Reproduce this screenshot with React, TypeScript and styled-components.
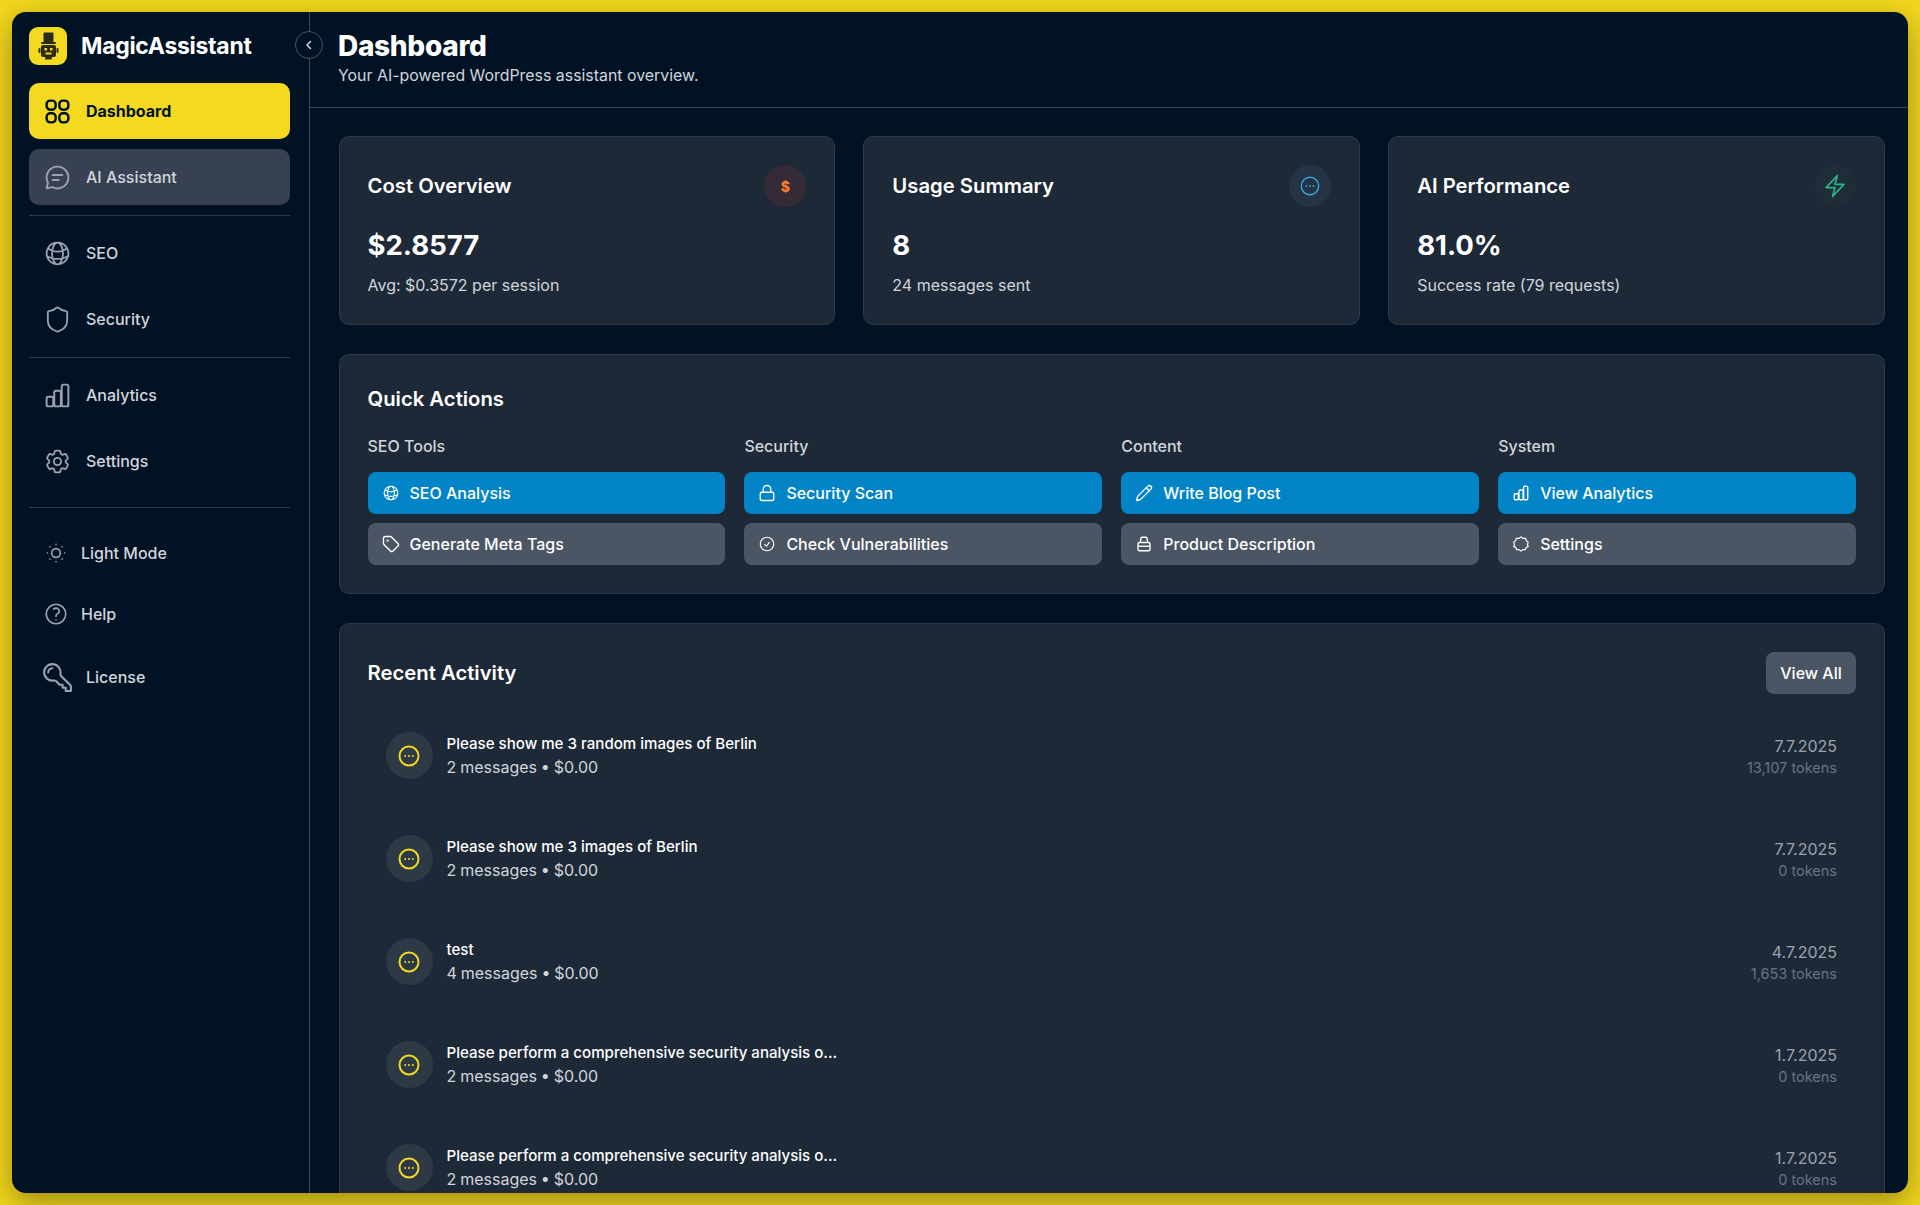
import React from 'react';
import styled, { createGlobalStyle } from 'styled-components';
import { Lock, Pencil, Shield, SunDim, Tag } from 'lucide-react';
import {
  HiOutlineBolt,
  HiOutlineCheckCircle,
  HiOutlineCog6Tooth,
  HiOutlineGlobeAlt,
  HiOutlineKey,
  HiOutlineQuestionMarkCircle,
} from 'react-icons/hi2';

const GlobalStyle = createGlobalStyle`
  html, body {
    margin: 0;
    height: 100%;
    background: #f1d71d;
  }
  * { box-sizing: border-box; }
`;

const Page = styled.div`
  height: 100vh;
  padding: 12px;
  background: #f1d71d;
  font-family: Inter, "Liberation Sans", sans-serif;
`;

const Window = styled.div`
  display: flex;
  height: 100%;
  overflow: hidden;
  border-radius: 14px;
  background: #001224;
  box-shadow: 0 10px 30px rgba(0, 0, 0, 0.35);
`;

const Sidebar = styled.aside`
  position: relative;
  flex: 0 0 298px;
  padding: 15px 19px 0 17px;
  border-right: 1px solid #3b4656;
`;

const Brand = styled.div`
  display: flex;
  align-items: center;
  gap: 14px;
  height: 38px;
  margin-bottom: 18px;
`;

const LogoBox = styled.div`
  display: flex;
  align-items: center;
  justify-content: center;
  width: 38px;
  height: 38px;
  border-radius: 9px;
  background: #f3da20;
`;

const BrandName = styled.div`
  font-size: 23px;
  font-weight: 700;
  letter-spacing: -0.3px;
  color: #ffffff;
`;

const CollapseButton = styled.button`
  position: absolute;
  top: 19px;
  right: -14px;
  z-index: 2;
  display: flex;
  align-items: center;
  justify-content: center;
  width: 28px;
  height: 28px;
  padding: 0;
  border: 1px solid #4b5563;
  border-radius: 50%;
  background: #001224;
  color: #d1d5db;
`;

const NavItem = styled.div<{ $variant?: 'active' | 'muted' }>`
  display: flex;
  align-items: center;
  gap: 14px;
  height: 56px;
  margin-bottom: 10px;
  padding: 0 14px;
  border-radius: 10px;
  font-size: 16px;
  font-weight: ${(p) => (p.$variant === 'active' ? 700 : 500)};
  color: ${(p) => (p.$variant === 'active' ? '#001224' : '#d1d5db')};
  background: ${(p) =>
    p.$variant === 'active' ? '#f3da20' : p.$variant === 'muted' ? '#374151' : 'transparent'};

  & > svg {
    flex: 0 0 29px;
    color: ${(p) => (p.$variant === 'active' ? '#001224' : '#9ca3af')};
  }
`;

const NavDivider = styled.div<{ $before?: number; $after?: number }>`
  height: 1px;
  margin-top: ${(p) => p.$before ?? 0}px;
  margin-bottom: ${(p) => p.$after ?? 9}px;
  background: #2e3b4b;
`;

const FooterList = styled.div`
  display: flex;
  flex-direction: column;
`;

const FooterItem = styled.div<{ $height: number }>`
  display: flex;
  align-items: center;
  gap: 12px;
  height: ${(p) => p.$height}px;
  padding: 0 14px;
  font-size: 16px;
  font-weight: 500;
  color: #d1d5db;

  & > svg { color: #9ca3af; }
`;

const LicenseIcon = styled(HiOutlineKey)`
  flex: 0 0 33px;
  margin-left: -2px;
  transform: scaleX(-1);
`;

const Main = styled.main`
  flex: 1;
  min-width: 0;
  display: flex;
  flex-direction: column;
  overflow: hidden;
`;

const Header = styled.header`
  flex: 0 0 96px;
  padding: 16px 28px 0;
  border-bottom: 1px solid #3b4656;
`;

const PageTitle = styled.h1`
  margin: 0;
  font-size: 28px;
  line-height: 36px;
  font-weight: 800;
  letter-spacing: -0.3px;
  color: #ffffff;
`;

const PageSubtitle = styled.p`
  margin: 0;
  font-size: 15.9px;
  line-height: 24px;
  color: #d1d5db;
`;

const Content = styled.div`
  display: flex;
  flex-direction: column;
  gap: 29px;
  padding: 28px 23px 0 28.5px;
`;

const StatGrid = styled.div`
  display: grid;
  grid-template-columns: repeat(3, 1fr);
  gap: 28px;
`;

const Card = styled.section<{ $top?: number; $bottom?: number }>`
  padding: ${(p) => p.$top ?? 28}px 28px ${(p) => p.$bottom ?? 28}px;
  border: 1px solid #2e3a4a;
  border-radius: 10px;
  background: #1e2937;
`;

const StatHead = styled.div`
  display: flex;
  align-items: center;
  justify-content: space-between;
  height: 42px;
`;

const CardTitle = styled.h2`
  margin: 0;
  font-size: 20.3px;
  line-height: 30px;
  font-weight: 600;
  color: #ffffff;
`;

const StatBadge = styled.div<{ $bg: string; $fg: string }>`
  display: flex;
  align-items: center;
  justify-content: center;
  width: 42px;
  height: 42px;
  border-radius: 50%;
  background: ${(p) => p.$bg};
  color: ${(p) => p.$fg};
  font-size: 14px;
  font-weight: 800;
`;

const StatValue = styled.div`
  margin-top: 20px;
  font-size: 27.5px;
  line-height: 36px;
  font-weight: 700;
  color: #ffffff;
`;

const StatNote = styled.div`
  margin-top: 10px;
  font-size: 16px;
  line-height: 24px;
  color: #d1d5db;
`;

const ActionGrid = styled.div`
  display: grid;
  grid-template-columns: repeat(4, 1fr);
  gap: 19px;
  margin-top: 20px;
`;

const ActionGroup = styled.div`
  display: flex;
  flex-direction: column;
  gap: 9px;
`;

const GroupLabel = styled.div`
  margin-bottom: 5px;
  font-size: 16px;
  line-height: 24px;
  font-weight: 500;
  color: #d1d5db;
`;

const ActionButton = styled.button<{ $primary?: boolean }>`
  display: flex;
  align-items: center;
  gap: 10px;
  height: 42px;
  padding: 0 14px;
  border: 0;
  border-radius: 8px;
  font-family: inherit;
  font-size: 16px;
  font-weight: 500;
  color: #ffffff;
  background: ${(p) => (p.$primary ? '#0284c7' : '#4b5563')};
`;

const ActivityHead = styled.div`
  display: flex;
  align-items: center;
  justify-content: space-between;
  margin-bottom: 20px;
`;

const ViewAll = styled.button`
  width: 90px;
  height: 42px;
  padding: 0;
  border: 0;
  border-radius: 8px;
  font-family: inherit;
  font-size: 16px;
  font-weight: 500;
  color: #ffffff;
  background: #4b5563;
`;

const ActivityList = styled.div`
  display: flex;
  flex-direction: column;
  gap: 20px;
`;

const ActivityRow = styled.div`
  display: flex;
  align-items: center;
  gap: 14px;
  padding: 18px 19px 18px 18px;
`;

const ActivityIcon = styled.div`
  flex: 0 0 47px;
  display: flex;
  align-items: center;
  justify-content: center;
  height: 47px;
  border-radius: 50%;
  background: #2e3946;
  color: #f3da20;
`;

const ActivityBody = styled.div`
  flex: 1;
  min-width: 0;
`;

const ActivityTitle = styled.div`
  font-size: 15.1px;
  line-height: 22px;
  font-weight: 500;
  color: #ffffff;
`;

const ActivityMeta = styled.div`
  margin-top: 1px;
  font-size: 16px;
  line-height: 23px;
  word-spacing: -0.6px;
  color: #d1d5db;
`;

const ActivityStats = styled.div`
  text-align: right;
`;

const ActivityDate = styled.div`
  font-size: 16px;
  line-height: 24px;
  color: #9ca3af;
`;

const ActivityTokens = styled.div`
  font-size: 14.5px;
  line-height: 20px;
  color: #6b7280;
`;

type IconProps = { size?: number; strokeWidth?: number };

const LogoIcon = (): JSX.Element => (
  <svg width="21" height="28" viewBox="0 0 21 28" fill="#2b2a14">
    <rect x="5.500" y="0.500" width="10" height="9.500" rx="1" />
    <rect x="3" y="10" width="15" height="2" rx="1" />
    <path d="M5 13h11a2 2 0 0 1 2 2v8a2 2 0 0 1-2 2H5a2 2 0 0 1-2-2v-8a2 2 0 0 1 2-2zm1.500 3v2.500H9V16zm5.500 0v2.500h2.500V16zm-4.500 4.500v2h6v-2z" fillRule="evenodd" />
    <rect x="0.500" y="16" width="2" height="5" rx="1" />
    <rect x="18.500" y="16" width="2" height="5" rx="1" />
    <rect x="7" y="25" width="7" height="2.500" rx="1" />
  </svg>
);

const GridIcon = ({ size = 29 }: IconProps): JSX.Element => (
  <svg width={size} height={size} viewBox="0 0 24 24" fill="none" stroke="currentColor" strokeWidth="2">
    <rect x="3" y="3" width="7.500" height="7.500" rx="3" />
    <rect x="13.500" y="3" width="7.500" height="7.500" rx="3" />
    <rect x="3" y="13.500" width="7.500" height="7.500" rx="3" />
    <rect x="13.500" y="13.500" width="7.500" height="7.500" rx="3" />
  </svg>
);

const ChatIcon = ({ size = 29 }: IconProps): JSX.Element => (
  <svg width={size} height={size} viewBox="0 0 24 24" fill="none" stroke="currentColor" strokeWidth="1.6" strokeLinecap="round" strokeLinejoin="round">
    <path d="M12 3a9 9 0 1 1-4.200 16.950L3 21l1.100-4.600A9 9 0 0 1 12 3z" />
    <path d="M8 10h8M8 14h5" />
  </svg>
);

const BarsIcon = ({ size = 29, strokeWidth = 1.6 }: IconProps): JSX.Element => (
  <svg width={size} height={size} viewBox="0 0 24 24" fill="none" stroke="currentColor" strokeWidth={strokeWidth}>
    <rect x="3" y="13" width="5.500" height="8" rx="1.400" />
    <rect x="9.300" y="8" width="5.500" height="13" rx="1.400" />
    <rect x="15.500" y="3" width="5.500" height="18" rx="1.400" />
  </svg>
);

const DotsCircleIcon = ({ size = 24, strokeWidth = 2 }: IconProps): JSX.Element => (
  <svg width={size} height={size} viewBox="0 0 24 24" fill="none" stroke="currentColor" strokeWidth={strokeWidth}>
    <circle cx="12" cy="12" r="9.500" />
    <g fill="currentColor" stroke="none">
      <circle cx="8.200" cy="12" r="1" />
      <circle cx="12" cy="12" r="1" />
      <circle cx="15.800" cy="12" r="1" />
    </g>
  </svg>
);

const BoxIcon = ({ size = 18 }: IconProps): JSX.Element => (
  <svg width={size} height={size} viewBox="0 0 24 24" fill="none" stroke="currentColor" strokeWidth="1.800" strokeLinejoin="round">
    <path d="M7 10l1-5.500A1.500 1.500 0 0 1 9.500 3h5A1.500 1.500 0 0 1 16 4.500L17 10" />
    <rect x="4" y="10" width="16" height="11" rx="2" />
    <path d="M4 15h16" />
  </svg>
);

const BadgeIcon = ({ size = 18 }: IconProps): JSX.Element => (
  <svg width={size} height={size} viewBox="0 0 24 24" fill="none" stroke="currentColor" strokeWidth="1.800" strokeLinejoin="round">
    <path d="M12 2.500l3.200 2.300 3.800-.2 1.100 3.600 2.900 2.300-1.200 3.500 1.200 3.500-3.100 1-1.100 3.400-3.800-.1-3 2.200-3-2.200-3.800.1-1.100-3.400-3.100-1 1.200-3.500-1.200-3.500 2.900-2.300 1.100-3.600 3.800.2z" transform="translate(1.400 0.300) scale(0.88)" />
  </svg>
);

const statCards = [
  { title: 'Cost Overview', value: '$2.8577', note: 'Avg: $0.3572 per session', bg: '#342b37', fg: '#f97f2f', icon: <>$</> },
  { title: 'Usage Summary', value: '8', note: '24 messages sent', bg: '#243444', fg: '#38a7dc', icon: <DotsCircleIcon size={22} strokeWidth={1.5} /> },
  { title: 'AI Performance', value: '81.0%', note: 'Success rate (79 requests)', bg: '#1f2d39', fg: '#2fb588', icon: <HiOutlineBolt size={26} /> },
];

const actionGroups = [
  {
    label: 'SEO Tools',
    primary: { text: 'SEO Analysis', icon: <HiOutlineGlobeAlt size={18} /> },
    secondary: { text: 'Generate Meta Tags', icon: <Tag size={18} strokeWidth={1.8} /> },
  },
  {
    label: 'Security',
    primary: { text: 'Security Scan', icon: <Lock size={18} strokeWidth={1.8} /> },
    secondary: { text: 'Check Vulnerabilities', icon: <HiOutlineCheckCircle size={18} /> },
  },
  {
    label: 'Content',
    primary: { text: 'Write Blog Post', icon: <Pencil size={18} strokeWidth={1.8} /> },
    secondary: { text: 'Product Description', icon: <BoxIcon size={18} /> },
  },
  {
    label: 'System',
    primary: { text: 'View Analytics', icon: <BarsIcon size={18} strokeWidth={1.8} /> },
    secondary: { text: 'Settings', icon: <BadgeIcon size={18} /> },
  },
];

const activities = [
  { title: 'Please show me 3 random images of Berlin', meta: '2 messages • $0.00', date: '7.7.2025', tokens: '13,107 tokens' },
  { title: 'Please show me 3 images of Berlin', meta: '2 messages • $0.00', date: '7.7.2025', tokens: '0 tokens' },
  { title: 'test', meta: '4 messages • $0.00', date: '4.7.2025', tokens: '1,653 tokens' },
  { title: 'Please perform a comprehensive security analysis o...', meta: '2 messages • $0.00', date: '1.7.2025', tokens: '0 tokens' },
  { title: 'Please perform a comprehensive security analysis o...', meta: '2 messages • $0.00', date: '1.7.2025', tokens: '0 tokens' },
];

const App = (): JSX.Element => (
  <Page>
    <GlobalStyle />
    <Window>
      <Sidebar>
        <Brand>
          <LogoBox><LogoIcon /></LogoBox>
          <BrandName>MagicAssistant</BrandName>
        </Brand>
        <CollapseButton aria-label="Collapse sidebar">
          <svg width="14" height="14" viewBox="0 0 14 14" fill="none" stroke="currentColor" strokeWidth="1.500" strokeLinecap="round" strokeLinejoin="round">
            <path d="M8.500 3.500L5 7l3.500 3.500" />
          </svg>
        </CollapseButton>
        <NavItem $variant="active"><GridIcon />Dashboard</NavItem>
        <NavItem $variant="muted"><ChatIcon />AI Assistant</NavItem>
        <NavDivider />
        <NavItem><HiOutlineGlobeAlt size={29} />SEO</NavItem>
        <NavItem><Shield size={29} strokeWidth={1.5} />Security</NavItem>
        <NavDivider />
        <NavItem><BarsIcon />Analytics</NavItem>
        <NavItem><HiOutlineCog6Tooth size={29} />Settings</NavItem>
        <NavDivider $before={18} $after={15} />
        <FooterList>
          <FooterItem $height={60}><SunDim size={26} strokeWidth={1.5} />Light Mode</FooterItem>
          <FooterItem $height={62}><HiOutlineQuestionMarkCircle size={26} />Help</FooterItem>
          <FooterItem $height={64}><LicenseIcon size={33} />License</FooterItem>
        </FooterList>
      </Sidebar>
      <Main>
        <Header>
          <PageTitle>Dashboard</PageTitle>
          <PageSubtitle>Your AI-powered WordPress assistant overview.</PageSubtitle>
        </Header>
        <Content>
          <StatGrid>
            {statCards.map((card) => (
              <Card key={card.title} $bottom={27}>
                <StatHead>
                  <CardTitle>{card.title}</CardTitle>
                  <StatBadge $bg={card.bg} $fg={card.fg}>{card.icon}</StatBadge>
                </StatHead>
                <StatValue>{card.value}</StatValue>
                <StatNote>{card.note}</StatNote>
              </Card>
            ))}
          </StatGrid>
          <Card $top={29}>
            <CardTitle>Quick Actions</CardTitle>
            <ActionGrid>
              {actionGroups.map((group) => (
                <ActionGroup key={group.label}>
                  <GroupLabel>{group.label}</GroupLabel>
                  <ActionButton $primary>{group.primary.icon}{group.primary.text}</ActionButton>
                  <ActionButton>{group.secondary.icon}{group.secondary.text}</ActionButton>
                </ActionGroup>
              ))}
            </ActionGrid>
          </Card>
          <Card>
            <ActivityHead>
              <CardTitle>Recent Activity</CardTitle>
              <ViewAll>View All</ViewAll>
            </ActivityHead>
            <ActivityList>
              {activities.map((item, index) => (
                <ActivityRow key={index}>
                  <ActivityIcon><DotsCircleIcon /></ActivityIcon>
                  <ActivityBody>
                    <ActivityTitle>{item.title}</ActivityTitle>
                    <ActivityMeta>{item.meta}</ActivityMeta>
                  </ActivityBody>
                  <ActivityStats>
                    <ActivityDate>{item.date}</ActivityDate>
                    <ActivityTokens>{item.tokens}</ActivityTokens>
                  </ActivityStats>
                </ActivityRow>
              ))}
            </ActivityList>
          </Card>
        </Content>
      </Main>
    </Window>
  </Page>
);

export default App;
